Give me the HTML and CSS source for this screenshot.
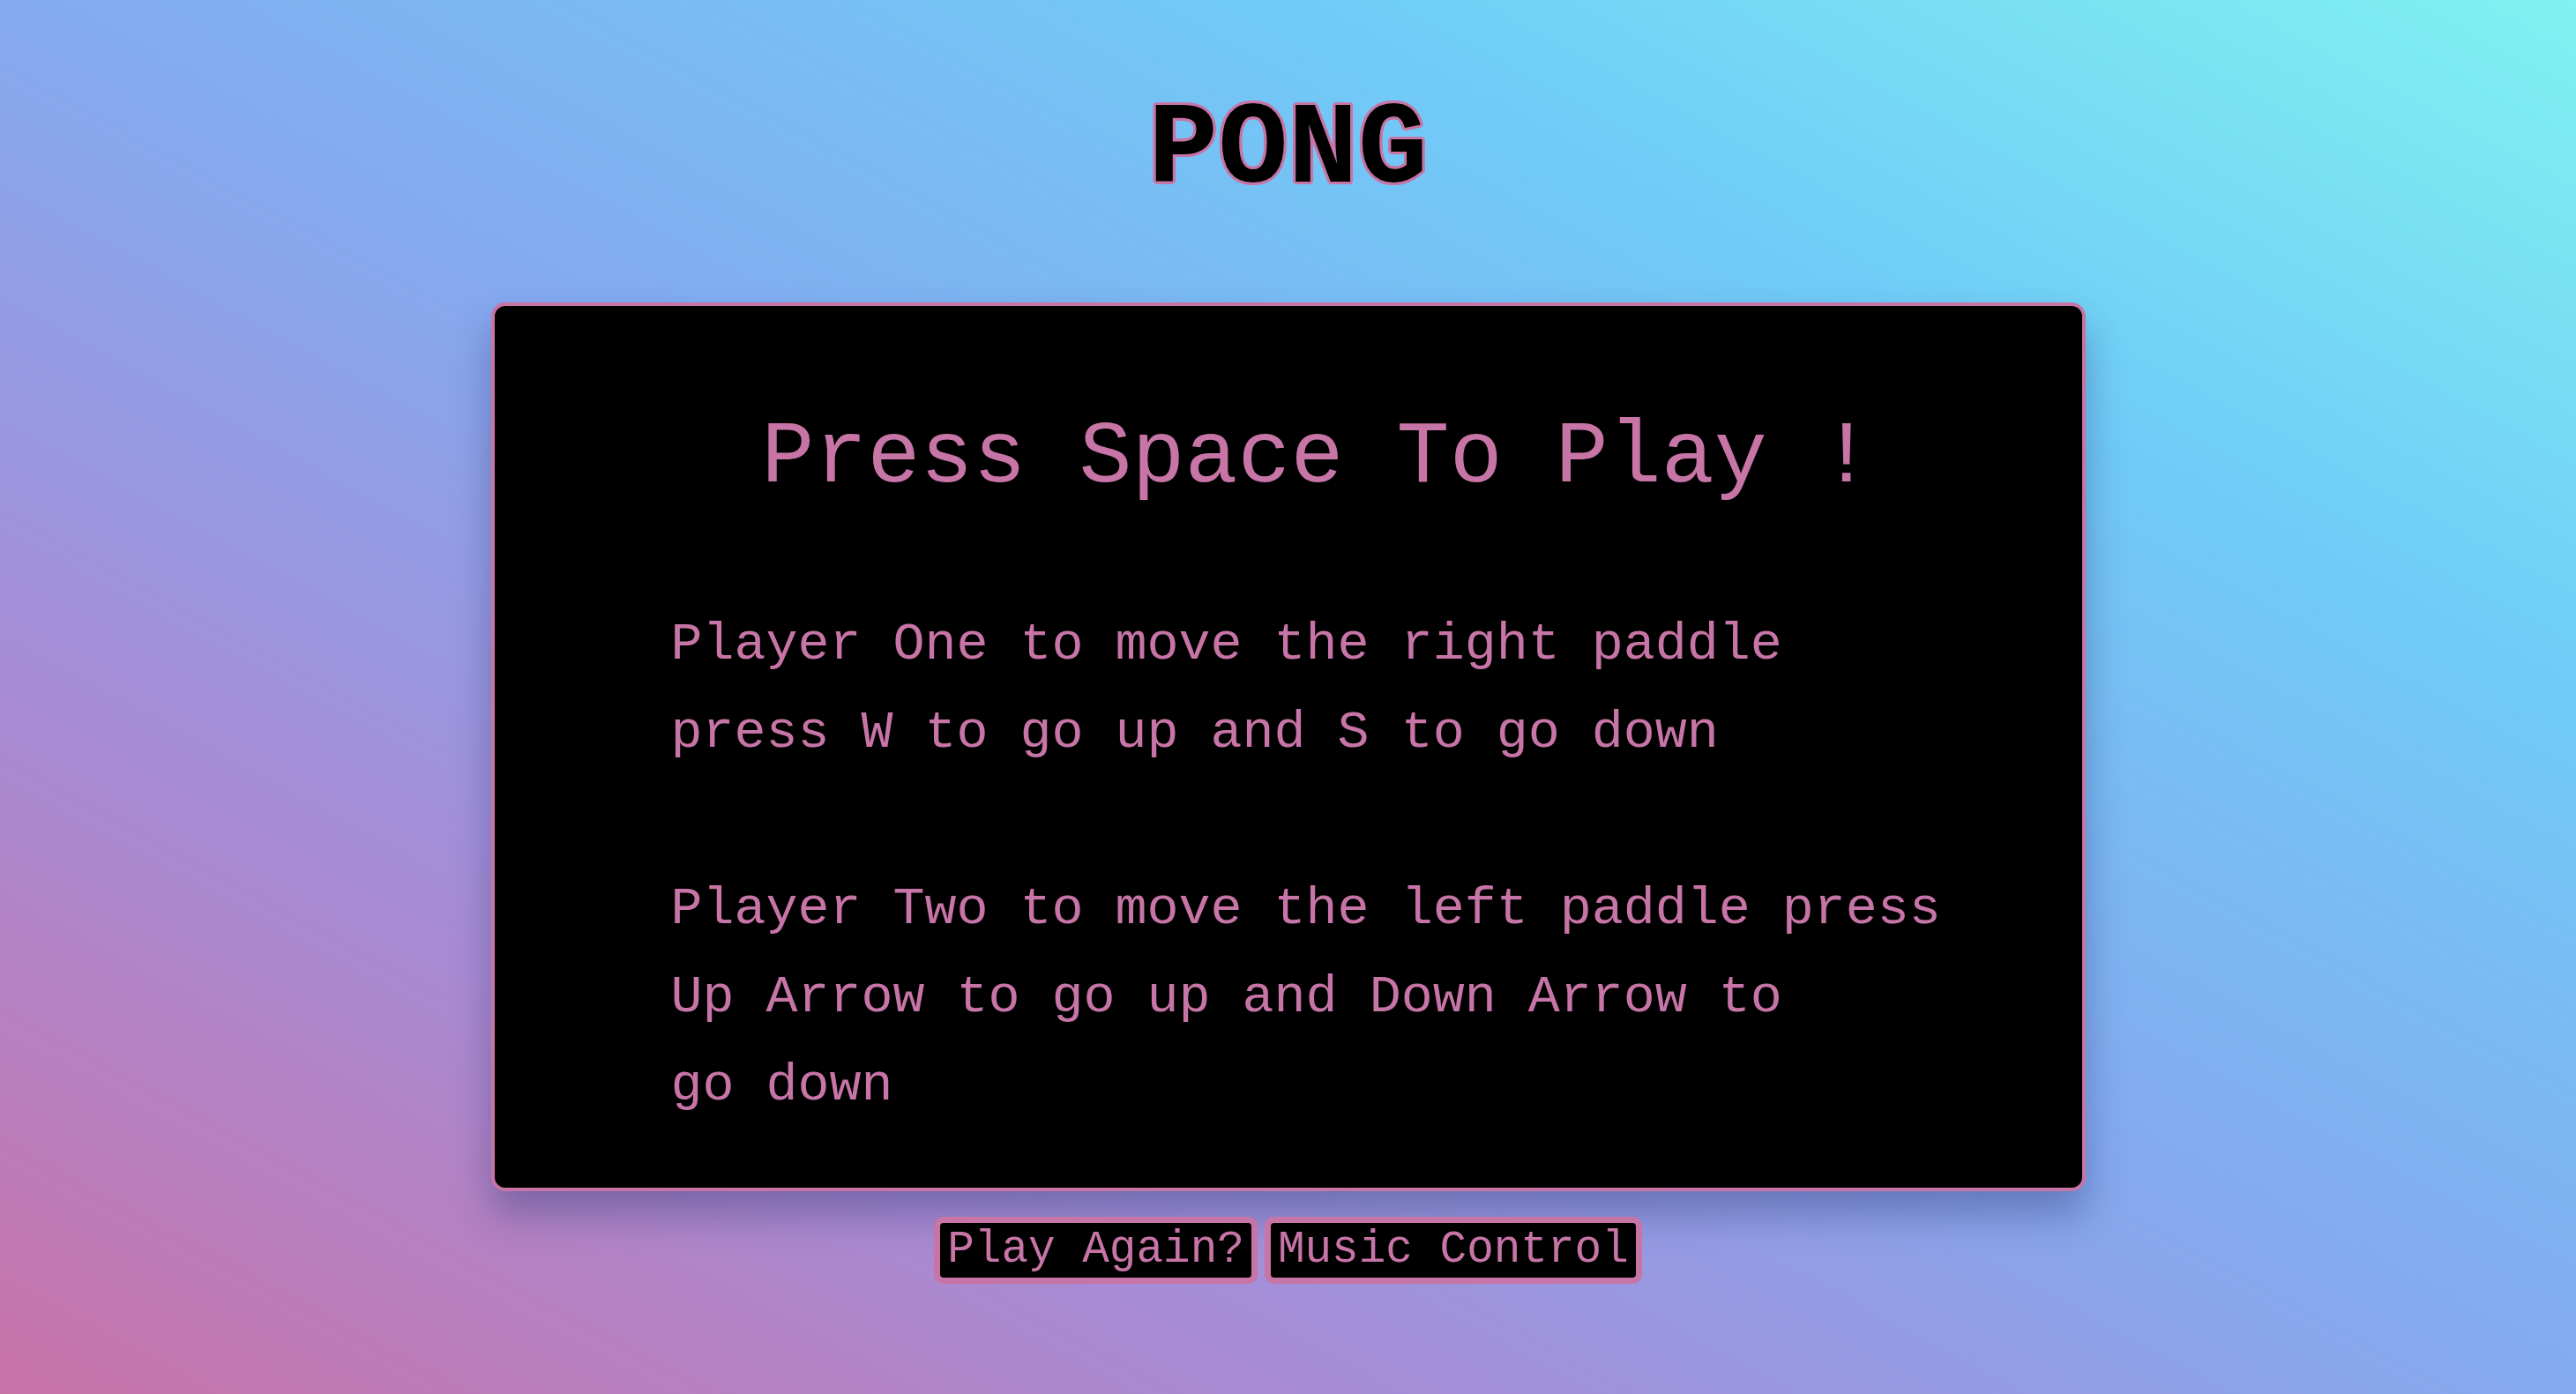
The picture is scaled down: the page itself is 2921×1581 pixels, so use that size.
FILE: index.html
```html
<!DOCTYPE html>
<html lang="en">
<head>
<meta charset="utf-8">
<title>Pong</title>
<link rel="stylesheet" href="styles.css">
</head>
<body>
  <h1 class="title">PONG</h1>
  <main class="board">
    <div class="board-heading">Press Space To Play !</div>
    <div class="instructions">
      <div class="line">Player One to move the right paddle</div>
      <div class="line">press W to go up and S to go down</div>
      <div class="line"></div>
      <div class="line">Player Two to move the left paddle press</div>
      <div class="line">Up Arrow to go up and Down Arrow to</div>
      <div class="line">go down</div>
    </div>
  </main>
  <div class="controls">
    <button class="btn">Play Again?</button>
    <button class="btn">Music Control</button>
  </div>
</body>
</html>
```
FILE: styles.css
```css
html, body {
  margin: 0;
  padding: 0;
}

body {
  width: 100vw;
  height: 100vh;
  overflow: hidden;
  font-family: "Courier New", "Liberation Mono", monospace;
  background: linear-gradient(to top right,
    #c873a8 0%,
    #a88bd4 25%,
    #84aaf0 50%,
    #70cbf7 75%,
    #80f2f0 100%);
  display: flex;
  flex-direction: column;
  align-items: center;
}

.title {
  margin: 101px 0 102px;
  font-size: 132px;
  line-height: 140px;
  font-weight: bold;
  color: #000;
  text-shadow:
    3px 0 0 #c774a6, -3px 0 0 #c774a6, 0 3px 0 #c774a6, 0 -3px 0 #c774a6,
    2px 2px 0 #c774a6, -2px 2px 0 #c774a6, 2px -2px 0 #c774a6, -2px -2px 0 #c774a6,
    3px 1px 0 #c774a6, -3px 1px 0 #c774a6, 3px -1px 0 #c774a6, -3px -1px 0 #c774a6,
    1px 3px 0 #c774a6, -1px 3px 0 #c774a6, 1px -3px 0 #c774a6, -1px -3px 0 #c774a6;
}

.board {
  box-sizing: content-box;
  width: 1800px;
  height: 1000px;
  flex: none;
  background: #000;
  border: 4px solid #c774a6;
  border-radius: 16px;
  box-shadow: 0 26px 44px rgba(40, 50, 110, 0.38);
  color: #c774a6;
}

.board-heading {
  padding: 123px 0 0 303px;
  font-size: 100px;
  line-height: 100px;
  white-space: pre;
}

.instructions {
  margin-top: 111px;
  padding-left: 200px;
  font-size: 60px;
  line-height: 100px;
}

.line {
  height: 100px;
  white-space: pre;
}

.controls {
  margin-top: 29px;
  display: flex;
  gap: 8px;
}

.btn {
  font-family: "Courier New", "Liberation Mono", monospace;
  font-size: 51px;
  line-height: normal;
  color: #c774a6;
  background: #000;
  border: 7px solid #c774a6;
  border-radius: 11px;
  padding: 2px 8px 3px;
  margin: 0;
  cursor: pointer;
}
```
